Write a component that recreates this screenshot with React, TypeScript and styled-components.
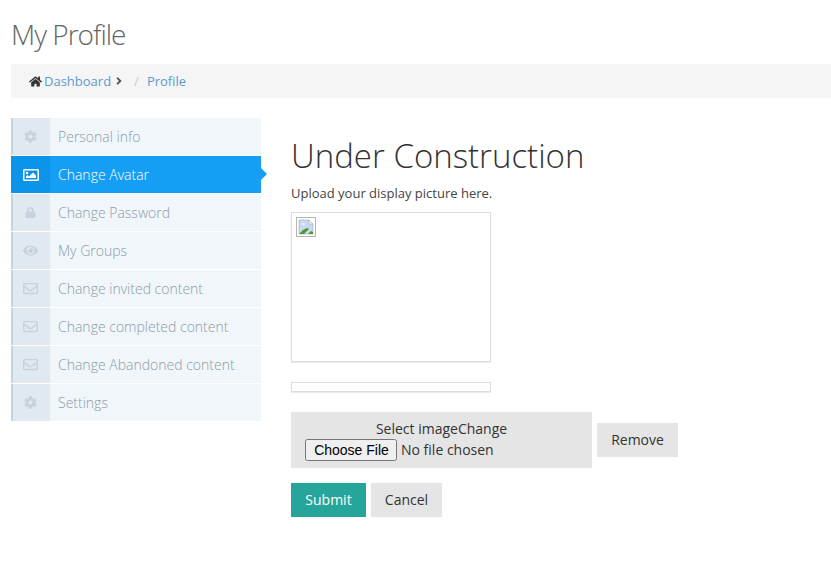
import React from "react";
import styled, { createGlobalStyle } from "styled-components";
import { FaAngleRight, FaCog, FaEye, FaHome, FaLock, FaRegEnvelope, FaRegImage } from "react-icons/fa";

const GlobalStyle = createGlobalStyle`
    html, body {
        margin: 0;
        padding: 0;
        background: #fff;
    }
    body {
        font-family: "Open Sans", sans-serif;
        font-size: 14px;
        color: #333;
    }
    * {
        box-sizing: border-box;
    }
`

const Page = styled.div`
    width: 831px;
    height: 576px;
    padding: 0 0 0 11px;
    overflow: hidden;
`

const Title = styled.h1`
    margin: 0;
    padding-top: 15px;
    height: 64px;
    font-size: 28px;
    line-height: 39px;
    font-weight: 300;
    letter-spacing: -1px;
    color: #666;
`

const Breadcrumb = styled.div`
    display: flex;
    align-items: center;
    height: 34px;
    padding-left: 18px;
    background: #f5f5f5;
    font-size: 13px;

    a {
        color: #5b9bd1;
        text-decoration: none;
    }
    svg {
        color: #333;
    }
    .home {
        margin-right: 2px;
    }
    .angle {
        margin-left: 2px;
        color: #555;
    }
    .sep {
        color: #ccc;
        margin: 0 8px 0 9px;
    }
`

const Body = styled.div`
    display: flex;
    margin-top: 20px;
`

const Side = styled.ul`
    width: 250px;
    margin: 0 30px 0 0;
    padding: 0;
    list-style: none;
`

const Item = styled.li<{ $active?: boolean }>`
    position: relative;
    display: flex;
    align-items: center;
    height: 37px;
    margin-bottom: 1px;
    background: ${(p) => (p.$active ? "#169ef4" : "#f0f6fa")};
    color: ${(p) => (p.$active ? "#fff" : "#8e9da8")};
    font-size: 14px;
    font-weight: 300;

    &:last-child {
        margin-bottom: 0;
    }

    ${(p) =>
        p.$active &&
        `&::after {
            content: "";
            position: absolute;
            right: -6px;
            top: 12px;
            border-left: 6px solid #169ef4;
            border-top: 6px solid transparent;
            border-bottom: 6px solid transparent;
        }`}
`

const IconCell = styled.span<{ $active?: boolean; $size: number }>`
    display: flex;
    align-items: center;
    justify-content: center;
    width: 39px;
    height: 100%;
    margin-right: 8px;
    padding-right: 2px;
    background: ${(p) => (p.$active ? "#0c94ea" : "#e0e8f0")};
    border-left: 2px solid ${(p) => (p.$active ? "#0c94ea" : "#c5d5e0")};
    color: ${(p) => (p.$active ? "#fff" : "#c5d3dd")};
    font-size: ${(p) => p.$size}px;
`

const Main = styled.div`
    width: 510px;
`

const Heading = styled.h2`
    margin: 0;
    padding-top: 17px;
    font-size: 33px;
    line-height: 42px;
    font-weight: 300;
    color: #333;
`

const Hint = styled.p`
    margin: 7px 0 0;
    font-size: 13px;
    line-height: 18px;
    color: #444;
`

const Thumb = styled.div`
    width: 200px;
    height: 150px;
    margin-top: 10px;
    padding: 4px;
    background: #fff;
    border: 1px solid #ddd;
    box-shadow: 0 1px 1px rgba(0, 0, 0, 0.08);
`

const Progress = styled.div`
    width: 200px;
    height: 10px;
    margin-top: 20px;
    border: 1px solid #ddd;
    box-shadow: 0 1px 1px rgba(0, 0, 0, 0.08);
`

const UploadRow = styled.div`
    display: flex;
    align-items: center;
    gap: 5px;
    margin-top: 20px;
`

const SelectBox = styled.div`
    width: 301px;
    height: 56px;
    padding-top: 7px;
    background: #e5e5e5;
    color: #333;
    font-size: 14px;
    line-height: 19px;
    text-align: center;

    span {
        display: block;
    }
    input {
        display: block;
        margin: 1px 0 0 14px;
        width: 260px;
        font-family: "Open Sans", sans-serif;
        font-size: 14px;
        color: #333;
    }
    input::file-selector-button {
        width: 92px;
        padding: 1px 4px 1px 5px;
        font-family: "Liberation Sans", Arial, sans-serif;
        font-size: 14px;
    }
`

const Button = styled.button<{ $primary?: boolean; $width: number }>`
    width: ${(p) => p.$width}px;
    height: 34px;
    padding: 0 0 2px;
    border: 0;
    background: ${(p) => (p.$primary ? "#26a69a" : "#e5e5e5")};
    color: ${(p) => (p.$primary ? "#fff" : "#333")};
    font-family: "Open Sans", sans-serif;
    font-size: 14px;
`

const Actions = styled.div`
    display: flex;
    gap: 5px;
    margin-top: 15px;
`

const BrokenImage = () => (
    <svg width="20" height="20" viewBox="0 0 20 20" style={{ display: "block" }}>
        <rect x="0.5" y="0.5" width="19" height="19" fill="#fff" stroke="#b5b5b5" />
        <path d="M3 3h10l4 4v10H3z" fill="#c8d9f5" stroke="#a9a9a9" strokeWidth="0.6" />
        <path d="M13 3v4h4z" fill="#fff" stroke="#a9a9a9" strokeWidth="0.6" />
        <path d="M3 17l4-4 4-2 2 1-5 5z" fill="#4f9a2c" />
        <path d="M12 17l3-3 2 1v2z" fill="#4f9a2c" />
        <path d="M5 7c1-1 3-1 4 0s-3 1-4 0z" fill="#fff" />
    </svg>
)

const items = [
    { label: "Personal info", icon: <FaCog />, size: 13 },
    { label: "Change Avatar", icon: <FaRegImage />, size: 16, active: true },
    { label: "Change Password", icon: <FaLock />, size: 11 },
    { label: "My Groups", icon: <FaEye />, size: 15 },
    { label: "Change invited content", icon: <FaRegEnvelope />, size: 15 },
    { label: "Change completed content", icon: <FaRegEnvelope />, size: 15 },
    { label: "Change Abandoned content", icon: <FaRegEnvelope />, size: 15 },
    { label: "Settings", icon: <FaCog />, size: 13 },
]

export default function App() {
    return (
        <Page>
            <GlobalStyle />
            <Title>My Profile</Title>
            <Breadcrumb>
                <FaHome className="home" size={13} />
                <a href="#">Dashboard</a>
                <FaAngleRight className="angle" size={12} />
                <span className="sep">/</span>
                <a href="#">Profile</a>
            </Breadcrumb>
            <Body>
                <Side>
                    {items.map((item) => (
                        <Item key={item.label} $active={item.active}>
                            <IconCell $active={item.active} $size={item.size}>{item.icon}</IconCell>
                            {item.label}
                        </Item>
                    ))}
                </Side>
                <Main>
                    <Heading>Under Construction</Heading>
                    <Hint>Upload your display picture here.</Hint>
                    <Thumb>
                        <BrokenImage />
                    </Thumb>
                    <Progress />
                    <UploadRow>
                        <SelectBox>
                            <span>Select imageChange</span>
                            <input type="file" />
                        </SelectBox>
                        <Button $width={81}>Remove</Button>
                    </UploadRow>
                    <Actions>
                        <Button $primary $width={75}>Submit</Button>
                        <Button $width={71}>Cancel</Button>
                    </Actions>
                </Main>
            </Body>
        </Page>
    )
}
